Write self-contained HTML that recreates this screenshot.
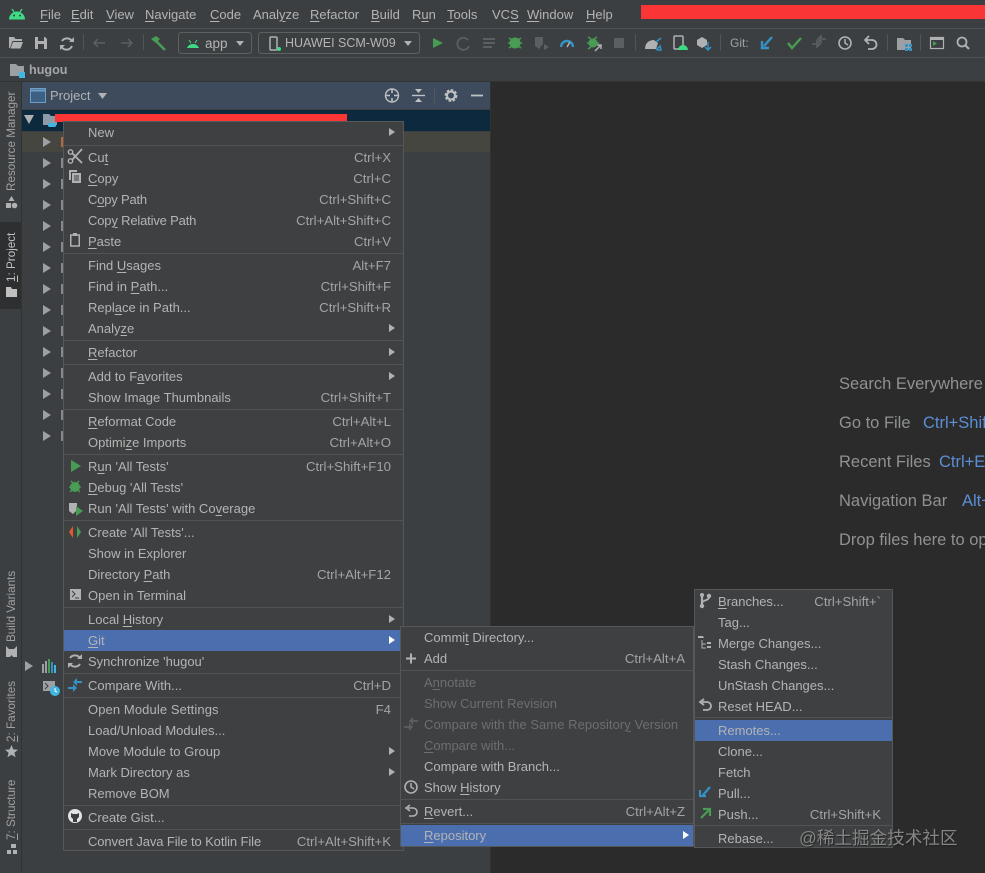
<!DOCTYPE html>
<html><head><meta charset="utf-8">
<style>
html,body{margin:0;padding:0;background:#3c3f41}
#r{position:relative;width:985px;height:873px;overflow:hidden;background:#3c3f41;font:13px/21px "Liberation Sans","Noto Sans CJK SC",sans-serif;color:#b4b4b4;filter:blur(.35px)}
#r div,#r svg,#r span.a{position:absolute}
u{text-underline-offset:2px}
.m{top:7px;font-size:13px;line-height:16px;color:#b4b4b4}
.menu{background:#3e4042;border:1px solid #555759;box-sizing:border-box}
.i{left:0;right:0;height:21px;white-space:nowrap}
.i b{font-weight:normal;position:absolute;top:0}
.i .k{right:12px;color:#a4a4a4;font-size:13.2px}
.l1 .i b.t{left:24px}
.l2 .i b.t{left:23px}
.l2 .i .k{right:8px}
.l3 .i b.t{left:23px}
.s{left:0;right:0;height:1px;background:#515355}
.h{background:#4b6eaf;color:#b4b4b4}
.d{color:#6c6e70}
.ar{right:8px;top:6px;width:0;height:0;border-left:6px solid #afb1b3;border-top:4px solid transparent;border-bottom:4px solid transparent}
.tr{left:43px;width:0;height:0;border-left:8px solid #9da0a2;border-top:5px solid transparent;border-bottom:5px solid transparent}
.stub{left:61px;width:3px;height:10px;background:#888}
.vt{transform:rotate(-90deg);transform-origin:0 0;white-space:nowrap;font-size:11.7px;line-height:14px;color:#a0a0a0}
.w{left:839px;font-size:16.5px;line-height:20px;color:#8f9192;white-space:nowrap}
.w span{color:#5a8fd6;position:absolute;top:0}
</style></head><body>
<div id="r">

<div style="left:0;top:0;width:985px;height:28px;background:#3c3f41"></div>
<svg style="left:8px;top:8px" width="18" height="12" viewBox="0 0 18 12"><path d="M1 11.500a8 8 0 0 1 16 0z" fill="#3ddc84"/><path d="M4 1l2 3M14 1l-2 3" stroke="#3ddc84" stroke-width="1.200"/><circle cx="6" cy="7.500" r="1" fill="#3c3f41"/><circle cx="12" cy="7.500" r="1" fill="#3c3f41"/></svg>
<div class="m" style="left:40px"><u>F</u>ile</div>
<div class="m" style="left:71px"><u>E</u>dit</div>
<div class="m" style="left:106px"><u>V</u>iew</div>
<div class="m" style="left:145px"><u>N</u>avigate</div>
<div class="m" style="left:210px"><u>C</u>ode</div>
<div class="m" style="left:253px">Anal<u>y</u>ze</div>
<div class="m" style="left:310px"><u>R</u>efactor</div>
<div class="m" style="left:371px"><u>B</u>uild</div>
<div class="m" style="left:412px">R<u>u</u>n</div>
<div class="m" style="left:447px"><u>T</u>ools</div>
<div class="m" style="left:492px">VC<u>S</u></div>
<div class="m" style="left:527px"><u>W</u>indow</div>
<div class="m" style="left:586px"><u>H</u>elp</div>
<div style="left:641px;top:5px;width:344px;height:14px;background:#f93535"></div>

<div style="left:0;top:28px;width:985px;height:1px;background:#505254"></div>
<div style="left:0;top:57px;width:985px;height:1px;background:#505254"></div>
<svg style="left:0;top:29px" width="985" height="28" viewBox="0 29 985 28" fill="none">
<path d="M9 37h5l1.500 2H22v2H12.500L10 48H9zM13 42h10l-2.500 6.500H10.500z" fill="#afb1b3"/>
<path d="M35 37h10l2 2v10H35z" fill="#afb1b3"/><path d="M38 37h6v4h-6zM38 44h6v5h-6z" fill="#3c3f41"/>
<path d="M72 41a6 6 0 0 0-10 0M61 46a6 6 0 0 0 11 0" stroke="#afb1b3" stroke-width="2"/><path d="M74 37v5h-5zM60 50v-5h5z" fill="#afb1b3"/>
<path d="M83.500 34v16M143.500 34v16" stroke="#515355"/>
<path d="M94 43h11M98 39l-4 4 4 4" stroke="#5c5f61" stroke-width="1.500"/>
<path d="M121 43h11M128 39l4 4-4 4" stroke="#5c5f61" stroke-width="1.500"/>
<path d="M151 39l5-3 4 3-4 4z" fill="#499c54"/><path d="M156 41l9 9" stroke="#499c54" stroke-width="2.600"/>
<rect x="178.500" y="32.500" width="73" height="21" rx="3" stroke="#5e6060"/>
<rect x="258.500" y="32.500" width="161" height="21" rx="3" stroke="#5e6060"/>
<path d="M187 48a6.500 6.500 0 0 1 12 0z" fill="#3ddc84"/><path d="M189 40l2 3M197 40l-2 3" stroke="#3ddc84"/>
<path d="M236 41h8l-4 5z" fill="#afb1b3"/><path d="M404 41h8l-4 5z" fill="#afb1b3"/>
<rect x="270" y="37" width="7" height="13" rx="1" stroke="#afb1b3" stroke-width="1.500"/><circle cx="279" cy="49" r="2" fill="#3ddc84"/>
<path d="M433 38l10 5-10 5z" fill="#499c54"/>
<path d="M468 40a6 6 0 1 0 1 6" stroke="#5c5f61" stroke-width="1.800"/><path d="M483 39h12M483 43h12M483 47h9" stroke="#5c5f61" stroke-width="2"/>
<circle cx="515" cy="43" r="5.500" fill="#499c54"/><path d="M508 43h14M509 38l3 2M521 38l-3 2M509 48l3-2M521 48l-3-2" stroke="#499c54" stroke-width="1.500"/>
<path d="M535 37h8v7l-4 5-4-3z" fill="#5c5f61"/><path d="M544 44l5 3-5 3z" fill="#5c5f61"/>
<path d="M561 47a6 6 0 0 1 12 0" stroke="#3592c4" stroke-width="2.400"/><path d="M567 47l3-5" stroke="#afb1b3" stroke-width="1.500"/>
<circle cx="593" cy="43" r="4.500" fill="#499c54"/><path d="M588 37l3 2M597 37l-3 2M587 43h12M588 49l3-2" stroke="#499c54" stroke-width="1.500"/><path d="M595 51l6-6M597 45h4v4" stroke="#afb1b3" stroke-width="1.500"/>
<rect x="614" y="38" width="10" height="10" fill="#5c5f61"/>
<path d="M635.500 34v17M720.500 34v17M887.500 34v17M920.500 34v17" stroke="#515355"/>
<path d="M645 49c0-6 4-9 9-9l4 3-2 6z" fill="#afb1b3"/><path d="M656 50l4-4 1 4h-4M661 38l-5 4" stroke="#3592c4" stroke-width="1.500"/>
<rect x="674" y="36" width="9" height="13" rx="1" stroke="#afb1b3" stroke-width="1.500"/><path d="M678 50a5 5 0 0 1 10 0z" fill="#3ddc84"/>
<path d="M697 40l5-3 5 3v5l-5 3-5-3z" fill="#afb1b3"/><path d="M708 42v8M705 47l3 3 3-3" stroke="#3592c4" stroke-width="1.500"/>
<path d="M772 37l-8 9M762 41v7h7" stroke="#3592c4" stroke-width="2.400"/>
<path d="M788 43l4 5 9-10" stroke="#499c54" stroke-width="2.400"/>
<path d="M812 44h5M817 41v6l3-3zM826 39h-5M821 36v6l-3-3z" stroke="#5c5f61" stroke-width="1.600"/>
<circle cx="845" cy="43" r="6" stroke="#afb1b3" stroke-width="1.600"/><path d="M845 39v4l3 2" stroke="#afb1b3" stroke-width="1.500"/>
<path d="M866 40h6a4.500 4.500 0 0 1 0 9h-4M869 36l-4 4 4 4" stroke="#afb1b3" stroke-width="1.800"/>
<path d="M897 38h6l2 2h6v10h-14z" fill="#9da0a2"/><rect x="905" y="44" width="3" height="3" fill="#3592c4"/><rect x="909" y="44" width="3" height="3" fill="#3592c4"/><rect x="905" y="48" width="3" height="3" fill="#3592c4"/><rect x="909" y="48" width="3" height="3" fill="#3592c4"/>
<rect x="930.500" y="37.500" width="13" height="11" stroke="#afb1b3" stroke-width="1.200"/><path d="M930 39h14" stroke="#afb1b3" stroke-width="2"/><path d="M933 41l4 2.500-4 2.500z" fill="#499c54"/>
<circle cx="962" cy="42" r="4.500" stroke="#afb1b3" stroke-width="1.800"/><path d="M965 45l4 4" stroke="#afb1b3" stroke-width="2"/>
</svg>
<div style="left:205px;top:35px;font-size:13.5px;line-height:18px">app</div>
<div style="left:285px;top:34px;font-size:12.5px;line-height:18px;white-space:nowrap">HUAWEI SCM-W09</div>
<div style="left:730px;top:35px;font-size:12px;line-height:16px;color:#a0a2a4">Git:</div>

<svg style="left:10px;top:63px" width="15" height="15" viewBox="0 0 15 15"><path d="M0 1h6l2 2h6v10H0z" fill="#9da0a2"/><rect x="9" y="9" width="6" height="6" fill="#40b6e0"/></svg>
<div style="left:29px;top:61px;font-weight:bold;font-size:12.6px;line-height:18px;color:#a4a6a8">hugou</div>
<div style="left:0;top:81px;width:985px;height:1px;background:#323232"></div>

<div style="left:0;top:82px;width:22px;height:791px;background:#3c3f41"></div>
<div style="left:21px;top:82px;width:1px;height:791px;background:#323232"></div>
<div style="left:0;top:222px;width:21px;height:87px;background:#2d2f30"></div>
<div class="vt" style="left:5px;top:191px">Resource Manager</div>
<div class="vt" style="left:5px;top:282px;color:#c0c0c0"><u>1</u>: Project</div>
<div class="vt" style="left:5px;top:642px">Build Variants</div>
<div class="vt" style="left:5px;top:742px"><u>2</u>: Favorites</div>
<div class="vt" style="left:5px;top:840px"><u>7</u>: Structure</div>
<svg style="left:5px;top:196px" width="13" height="13" viewBox="0 0 13 13"><path d="M6.500 0l3 5h-6z" fill="#afb1b3"/><rect x="1" y="7" width="5" height="5" fill="#afb1b3"/><circle cx="9.500" cy="9.500" r="2.800" fill="#afb1b3"/></svg>
<svg style="left:5px;top:286px" width="13" height="12" viewBox="0 0 13 12"><path d="M1 1h5l1 2h5v8H1z" fill="#c0c0c0"/></svg>
<svg style="left:5px;top:646px" width="13" height="12" viewBox="0 0 13 12"><path d="M1 0l3 3h5l3-3v11H8l-1.500-2L5 11H1z" fill="#afb1b3"/></svg>
<svg style="left:5px;top:745px" width="13" height="13" viewBox="0 0 13 13"><path d="M6.500 0l1.800 4.400 4.700.3-3.600 3 1.200 4.600-4.100-2.500-4.100 2.500 1.200-4.600L0 4.700l4.700-.3z" fill="#afb1b3"/></svg>
<svg style="left:6px;top:843px" width="12" height="12" viewBox="0 0 12 12"><path d="M5 1h5v4H5zM1 7h4v4H1zM7 7h4v4H7z" fill="#afb1b3"/></svg>

<div style="left:22px;top:82px;width:468px;height:791px;background:#3c3f41"></div>
<div style="left:22px;top:82px;width:468px;height:27px;background:#3d4b5c"></div>
<svg style="left:30px;top:88px" width="16" height="15" viewBox="0 0 16 15"><rect x=".5" y=".5" width="15" height="14" fill="#3d6185" stroke="#6e9fc7"/><path d="M1 2.500h14" stroke="#6e9fc7" stroke-width="2"/></svg>
<div style="left:50px;top:87px;font-size:13px;line-height:18px;color:#b0b3b5">Project</div>
<svg style="left:98px;top:93px" width="10" height="6"><path d="M0 0h9L4.500 6z" fill="#b0b3b5"/></svg>
<svg style="left:384px;top:87px" width="100" height="17" viewBox="384 87 100 17" fill="none">
<circle cx="392" cy="95.500" r="6.500" stroke="#bfc1c3" stroke-width="1.400"/><path d="M392 89v4M392 98v4M386 95.500h4M394 95.500h4" stroke="#bfc1c3" stroke-width="1.600"/>
<path d="M412 95.500h13" stroke="#bfc1c3" stroke-width="1.400"/><path d="M415 89h7l-3.500 4zM415 102h7l-3.500-4z" fill="#bfc1c3"/>
<path d="M434.500 88v15" stroke="#52585f"/>
<circle cx="451" cy="95.500" r="4.800" stroke="#bfc1c3" stroke-width="3.200" stroke-dasharray="2.300 1.400"/><circle cx="451" cy="95.500" r="4" stroke="#bfc1c3" stroke-width="2"/>
<path d="M471 95.500h12" stroke="#bfc1c3" stroke-width="1.800"/>
</svg>
<div style="left:22px;top:110px;width:468px;height:21px;background:#0d293e"></div>
<div style="left:22px;top:132px;width:468px;height:20px;background:#464640"></div>
<svg style="left:24px;top:115px" width="11" height="9"><path d="M0 0h10L5 9z" fill="#afb1b3"/></svg>
<svg style="left:43px;top:113px" width="16" height="16" viewBox="0 0 16 16"><path d="M0 1h6l2 2h6v9H0z" fill="#8d9ba8"/><rect x="5" y="10" width="8" height="4" rx="1.500" fill="#40b6e0"/></svg>

<div class="tr" style="top:137px"></div><div class="tr" style="top:158px"></div><div class="tr" style="top:179px"></div><div class="tr" style="top:200px"></div><div class="tr" style="top:221px"></div><div class="tr" style="top:242px"></div><div class="tr" style="top:263px"></div><div class="tr" style="top:284px"></div><div class="tr" style="top:305px"></div><div class="tr" style="top:326px"></div><div class="tr" style="top:347px"></div><div class="tr" style="top:368px"></div><div class="tr" style="top:389px"></div><div class="tr" style="top:410px"></div><div class="tr" style="top:431px"></div>
<div class="tr" style="left:25px;top:661px"></div>
<div class="stub" style="top:137px;background:#b5693f"></div><div class="stub" style="top:158px"></div><div class="stub" style="top:179px"></div><div class="stub" style="top:200px"></div><div class="stub" style="top:221px"></div><div class="stub" style="top:242px"></div><div class="stub" style="top:263px"></div><div class="stub" style="top:284px"></div><div class="stub" style="top:305px"></div><div class="stub" style="top:326px"></div><div class="stub" style="top:347px"></div><div class="stub" style="top:368px"></div><div class="stub" style="top:389px"></div><div class="stub" style="top:410px"></div><div class="stub" style="top:431px"></div>
<svg style="left:42px;top:659px" width="16" height="14" viewBox="0 0 16 14"><path d="M1 5v9M4 2v12" stroke="#9da0a2" stroke-width="2"/><path d="M7 0v14" stroke="#499c54" stroke-width="2"/><path d="M10 3v11" stroke="#3592c4" stroke-width="2"/><path d="M13 6v8" stroke="#40b6e0" stroke-width="2"/></svg>
<svg style="left:42px;top:680px" width="18" height="16" viewBox="0 0 18 16"><rect x="1" y="1" width="12" height="10" fill="#9da0a2"/><path d="M3 3l3 3-3 3" stroke="#3c3f41" fill="none"/><circle cx="13" cy="11" r="5" fill="#40b6e0"/><path d="M13 8v3l2 1" stroke="#fff" fill="none"/></svg>
<div style="left:55px;top:114px;width:292px;height:8px;background:#f93535"></div>

<div style="left:491px;top:82px;width:494px;height:791px;background:#2b2b2b"></div>
<div style="left:490px;top:82px;width:1px;height:791px;background:#323232"></div>
<div class="w" style="top:374px">Search Everywhere</div>
<div class="w" style="top:413px">Go to File<span style="left:84px">Ctrl+Shift+N</span></div>
<div class="w" style="top:452px">Recent Files<span style="left:100px">Ctrl+E</span></div>
<div class="w" style="top:491px">Navigation Bar<span style="left:123px">Alt+Home</span></div>
<div class="w" style="top:530px">Drop files here to open</div>

<div class="menu l1" style="left:63px;top:121px;width:341px;height:730px">
<div class="i" style="top:0"><b class="t">New</b><span class="a ar"></span></div>
<div class="s" style="top:23px"></div>
<div class="i" style="top:25px"><b class="t">Cu<u>t</u></b><b class="k">Ctrl+X</b></div>
<div class="i" style="top:46px"><b class="t"><u>C</u>opy</b><b class="k">Ctrl+C</b></div>
<div class="i" style="top:67px"><b class="t" style="letter-spacing:-.2px">C<u>o</u>py Path</b><b class="k">Ctrl+Shift+C</b></div>
<div class="i" style="top:88px"><b class="t" style="letter-spacing:-.17px">Cop<u>y</u> Relative Path</b><b class="k">Ctrl+Alt+Shift+C</b></div>
<div class="i" style="top:109px"><b class="t"><u>P</u>aste</b><b class="k">Ctrl+V</b></div>
<div class="s" style="top:131px"></div>
<div class="i" style="top:133px"><b class="t">Find <u>U</u>sages</b><b class="k">Alt+F7</b></div>
<div class="i" style="top:154px"><b class="t">Find in <u>P</u>ath...</b><b class="k">Ctrl+Shift+F</b></div>
<div class="i" style="top:175px"><b class="t">Repl<u>a</u>ce in Path...</b><b class="k">Ctrl+Shift+R</b></div>
<div class="i" style="top:196px"><b class="t">Analy<u>z</u>e</b><span class="a ar"></span></div>
<div class="s" style="top:218px"></div>
<div class="i" style="top:220px"><b class="t"><u>R</u>efactor</b><span class="a ar"></span></div>
<div class="s" style="top:242px"></div>
<div class="i" style="top:244px"><b class="t">Add to F<u>a</u>vorites</b><span class="a ar"></span></div>
<div class="i" style="top:265px"><b class="t">Show Image Thumbnails</b><b class="k">Ctrl+Shift+T</b></div>
<div class="s" style="top:287px"></div>
<div class="i" style="top:289px"><b class="t"><u>R</u>eformat Code</b><b class="k">Ctrl+Alt+L</b></div>
<div class="i" style="top:310px"><b class="t">Optimi<u>z</u>e Imports</b><b class="k">Ctrl+Alt+O</b></div>
<div class="s" style="top:332px"></div>
<div class="i" style="top:334px"><b class="t">R<u>u</u>n 'All Tests'</b><b class="k">Ctrl+Shift+F10</b></div>
<div class="i" style="top:355px"><b class="t"><u>D</u>ebug 'All Tests'</b></div>
<div class="i" style="top:376px"><b class="t">Run 'All Tests' with Co<u>v</u>erage</b></div>
<div class="s" style="top:398px"></div>
<div class="i" style="top:400px"><b class="t">Create 'All Tests'...</b></div>
<div class="i" style="top:421px"><b class="t">Show in Explorer</b></div>
<div class="i" style="top:442px"><b class="t">Directory <u>P</u>ath</b><b class="k">Ctrl+Alt+F12</b></div>
<div class="i" style="top:463px"><b class="t">Open in Terminal</b></div>
<div class="s" style="top:485px"></div>
<div class="i" style="top:487px"><b class="t">Local <u>H</u>istory</b><span class="a ar"></span></div>
<div class="i h" style="top:508px"><b class="t"><u>G</u>it</b><span class="a ar" style="border-left-color:#fff"></span></div>
<div class="i" style="top:529px"><b class="t">Synchronize 'hugou'</b></div>
<div class="s" style="top:551px"></div>
<div class="i" style="top:553px"><b class="t">Compare With...</b><b class="k">Ctrl+D</b></div>
<div class="s" style="top:575px"></div>
<div class="i" style="top:577px"><b class="t" style="letter-spacing:.1px">Open Module Settings</b><b class="k">F4</b></div>
<div class="i" style="top:598px"><b class="t">Load/Unload Modules...</b></div>
<div class="i" style="top:619px"><b class="t">Move Module to Group</b><span class="a ar"></span></div>
<div class="i" style="top:640px"><b class="t">Mark Directory as</b><span class="a ar"></span></div>
<div class="i" style="top:661px"><b class="t">Remove BOM</b></div>
<div class="s" style="top:683px"></div>
<div class="i" style="top:685px"><b class="t">Create Gist...</b></div>
<div class="s" style="top:707px"></div>
<div class="i" style="top:709px"><b class="t" style="letter-spacing:-.1px">Convert Java File to Kotlin File</b><b class="k">Ctrl+Alt+Shift+K</b></div>
</div>
<svg style="left:63px;top:121px" width="24" height="731" viewBox="63 121 24 731" fill="none">
<path d="M72 153l10 10M72 160l10-11" stroke="#afb1b3" stroke-width="1.800"/><circle cx="70.500" cy="152" r="2.200" stroke="#afb1b3" stroke-width="1.400"/><circle cx="70.500" cy="161" r="2.200" stroke="#afb1b3" stroke-width="1.400"/>
<path d="M69 170h8v2h-6v8h-2z" fill="#afb1b3"/><rect x="72" y="173" width="9" height="10" fill="#afb1b3"/><path d="M74 176h5M74 178h5M74 180h5" stroke="#3c3f41"/>
<rect x="70.750" y="235" width="8.500" height="11" stroke="#afb1b3" stroke-width="1.500"/><rect x="73" y="233" width="4" height="3" fill="#afb1b3"/>
<path d="M71 460l10 6-10 6z" fill="#499c54"/>
<circle cx="75" cy="487" r="5" fill="#499c54"/><path d="M69 487h12M71 481l2 2M79 481l-2 2M70 492l2-2M80 492l-2-2" stroke="#499c54" stroke-width="1.300"/>
<path d="M69 503h8v7l-4 4-4-3z" fill="#afb1b3"/><path d="M76 506l7 5-7 5z" fill="#499c54"/>
<path d="M73 526l-4 6 4 6z" fill="#e05a2b"/><path d="M77 526l4 6-4 6z" fill="#499c54"/>
<rect x="70" y="589" width="11" height="11" fill="#afb1b3"/><path d="M72 591l3 3-3 3M75 598h4" stroke="#3c3f41"/>
<path d="M80 658a6 6 0 0 0-10 0M70 664a6 6 0 0 0 10 0" stroke="#afb1b3" stroke-width="2"/><path d="M82 654v5h-5zM68 668v-5h5z" fill="#afb1b3"/>
<path d="M68 688h5M82 682h-5" stroke="#3592c4" stroke-width="2"/><path d="M73 684v8l4-4zM77 678v8l-4-4z" fill="#3592c4"/>
<circle cx="75" cy="816" r="7" fill="#e3e3e3"/><path d="M71 813l2 1h4l2-1v4l-2 2v3h-4v-3l-2-2z" fill="#3c3f41"/>
</svg>

<div class="menu l2" style="left:400px;top:626px;width:294px;height:221px">
<div class="i" style="top:0"><b class="t">Commi<u>t</u> Directory...</b></div>
<div class="i" style="top:21px"><b class="t">Add</b><b class="k">Ctrl+Alt+A</b></div>
<div class="s" style="top:43px"></div>
<div class="i d" style="top:45px"><b class="t">A<u>n</u>notate</b></div>
<div class="i d" style="top:66px"><b class="t">Show Current Revision</b></div>
<div class="i d" style="top:87px"><b class="t" style="letter-spacing:.05px">Compare with the Same Repositor<u>y</u> Version</b></div>
<div class="i d" style="top:108px"><b class="t"><u>C</u>ompare with...</b></div>
<div class="i" style="top:129px"><b class="t">Compare with Branch...</b></div>
<div class="i" style="top:150px"><b class="t">Show <u>H</u>istory</b></div>
<div class="s" style="top:172px"></div>
<div class="i" style="top:174px"><b class="t"><u>R</u>evert...</b><b class="k">Ctrl+Alt+Z</b></div>
<div class="s" style="top:196px"></div>
<div class="i h" style="top:198px"><b class="t"><u>R</u>epository</b><span class="a ar" style="border-left-color:#fff;right:4px"></span></div>
</div>
<svg style="left:400px;top:626px" width="24" height="221" viewBox="400 626 24 221" fill="none">
<path d="M406 658.500h10M411 653.500v10" stroke="#afb1b3" stroke-width="2"/>
<path d="M404 727h5M418 721h-5" stroke="#5c5f61" stroke-width="1.800"/><path d="M409 723v8l4-4zM413 717v8l-4-4z" fill="#5c5f61"/>
<circle cx="411" cy="787" r="6" stroke="#afb1b3" stroke-width="1.600"/><path d="M411 783v4l3 2" stroke="#afb1b3" stroke-width="1.500"/>
<path d="M408 808h5a4 4 0 0 1 0 8h-4M410 805l-4 3 4 3" stroke="#afb1b3" stroke-width="1.600"/>
</svg>

<div class="menu l3" style="left:694px;top:589px;width:199px;height:259px">
<div class="i" style="top:1px"><b class="t"><u>B</u>ranches...</b><b class="k" style="right:11px">Ctrl+Shift+`</b></div>
<div class="i" style="top:22px"><b class="t">Tag...</b></div>
<div class="i" style="top:43px"><b class="t">Merge Changes...</b></div>
<div class="i" style="top:64px"><b class="t">Stash Changes...</b></div>
<div class="i" style="top:85px"><b class="t">UnStash Changes...</b></div>
<div class="i" style="top:106px"><b class="t">Reset HEAD...</b></div>
<div class="s" style="top:127px"></div>
<div class="i h" style="top:130px"><b class="t">Remotes...</b></div>
<div class="i" style="top:151px"><b class="t">Clone...</b></div>
<div class="i" style="top:172px"><b class="t">Fetch</b></div>
<div class="i" style="top:193px"><b class="t">Pull...</b></div>
<div class="i" style="top:214px"><b class="t">Push...</b><b class="k" style="right:11px">Ctrl+Shift+K</b></div>
<div class="s" style="top:235px"></div>
<div class="i" style="top:238px"><b class="t">Rebase...</b></div>
</div>
<svg style="left:694px;top:589px" width="24" height="260" viewBox="694 589 24 260" fill="none">
<path d="M702 595v12" stroke="#afb1b3" stroke-width="2.200"/><circle cx="702" cy="595" r="2" fill="#afb1b3"/><circle cx="702" cy="606" r="2.200" fill="#afb1b3"/><circle cx="709" cy="596" r="2.200" fill="#afb1b3"/><path d="M709 597c0 4-7 3-7 6" stroke="#afb1b3" stroke-width="1.800"/>
<path d="M698 636h5l1 2h-6z" fill="#afb1b3"/><path d="M702 640v8h4M702 644h4" stroke="#afb1b3"/><rect x="707" y="642" width="4" height="2" fill="#afb1b3"/><rect x="707" y="646" width="4" height="2" fill="#afb1b3"/>
<path d="M702 702h5a4 4 0 0 1 0 8h-4M704 699l-4 3 4 3" stroke="#afb1b3" stroke-width="1.800"/>
<path d="M710 787l-7 8M700 790v6h6" stroke="#3592c4" stroke-width="2.200"/>
<path d="M701 818l8-8M703 809h7v7" stroke="#499c54" stroke-width="2.200"/>
</svg>

<div style="left:799px;top:826px;font:17.6px/24px 'Liberation Sans','Noto Sans CJK SC',sans-serif;color:#858585;white-space:nowrap;text-shadow:1px 1px 1px #222">@稀土掘金技术社区</div>
</div>
</body></html>
